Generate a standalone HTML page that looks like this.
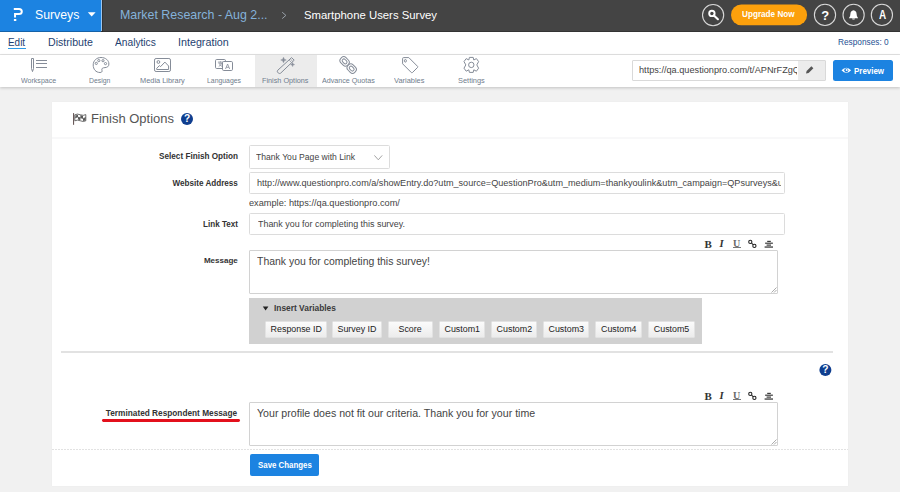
<!DOCTYPE html>
<html><head><meta charset="utf-8">
<style>
*{box-sizing:border-box;margin:0;padding:0}
html,body{width:900px;height:492px;overflow:hidden;background:#f1f1f1;font-family:"Liberation Sans",sans-serif;position:relative}
.a{position:absolute}
.t{position:absolute;white-space:nowrap;line-height:1}
svg{position:absolute;overflow:visible}
.ic{fill:none;stroke:#858c98;stroke-width:1}
.vb{position:absolute;top:321px;height:17px;background:linear-gradient(#fbfbfb,#ececec);border:1px solid #e2e2e2;border-radius:1px}
.vt{position:absolute;top:324.6px;font-size:8.9px;line-height:1;color:#222;white-space:nowrap}
</style></head><body>
<!-- top bar -->
<div class="a" style="left:0;top:0;width:900px;height:32px;background:#444"></div>
<div class="a" style="left:0;top:0;width:101px;height:32px;background:#1c83e1"></div>
<div class="a" style="left:101px;top:0;width:1px;height:31px;background:#9cc6ee"></div>
<div class="a" style="left:102px;top:0;width:1px;height:32px;background:#333"></div>
<div class="a" style="left:0;top:31px;width:900px;height:1px;background:rgba(0,0,0,.25)"></div>
<svg width="900" height="32" style="left:0;top:0">
  <path d="M13.8 8.9 H19 Q21.8 8.9 21.8 11.5 Q21.8 14.05 19 14.05 H15.05 V17.4" fill="none" stroke="#fff" stroke-width="2"/>
  <rect x="13.9" y="19" width="2.4" height="2" fill="#fff"/>
  <path d="M87.8 12.3 H95.6 L91.7 16.5 Z" fill="#fff"/>
  <path d="M282.2 12.2 L285.9 15.4 L282.2 18.6" fill="none" stroke="#9aa2aa" stroke-width="1"/>
  <circle cx="713.1" cy="15.1" r="10.6" fill="none" stroke="#d8d8d8" stroke-width="1.1"/>
  <circle cx="711.9" cy="13.4" r="2.7" fill="none" stroke="#fff" stroke-width="1.9"/>
  <path d="M713.9 15.4 L717.9 19.2" stroke="#fff" stroke-width="2.1" stroke-linecap="round"/>
  <rect x="731" y="4.6" width="76.1" height="20.6" rx="10.3" fill="#fca00c"/>
  <circle cx="825" cy="14.9" r="10.6" fill="none" stroke="#d8d8d8" stroke-width="1.1"/>
  <circle cx="853.6" cy="14.9" r="10.6" fill="none" stroke="#d8d8d8" stroke-width="1.1"/>
  <circle cx="881.9" cy="14.9" r="10.6" fill="none" stroke="#d8d8d8" stroke-width="1.1"/>
  <path d="M848.9 18.3 Q850.4 16.8 850.4 14 Q850.5 10.6 853.5 10.2 Q856.5 10.6 856.6 14 Q856.6 16.8 858.1 18.3 Z" fill="#fff"/>
  <path d="M852 18.4 H855 Q854.8 19.6 853.5 19.6 Q852.2 19.6 852 18.4 Z" fill="#fff"/>
</svg>
<div class="t" style="left:821.2px;top:8.6px;font-size:13px;font-weight:bold;color:#fff">?</div>
<div class="t" style="left:878.5px;top:9.1px;font-size:12.1px;font-weight:bold;color:#fff;transform:scaleX(.82);transform-origin:0 0">A</div>

<!-- nav -->
<div class="a" style="left:0;top:32px;width:900px;height:22px;background:#fff"></div>
<div class="a" style="left:0;top:54px;width:900px;height:1px;background:#e4e4e4"></div>
<div class="a" style="left:8px;top:48px;width:18px;height:1.3px;background:#2d9ae6"></div>

<!-- toolbar -->
<div class="a" style="left:0;top:55px;width:900px;height:32px;background:#fff;box-shadow:0 1px 3px rgba(0,0,0,.2)"></div>
<div class="a" style="left:255px;top:55px;width:62px;height:32px;background:#ececec"></div>
<svg width="900" height="90" style="left:0;top:0" class="ic">
  <!-- workspace -->
  <path d="M31.5 58.5 H33.5 V68.6 L32.5 71.6 L31.5 68.6 Z"/>
  <path d="M36 60.5 H47 M36 63.5 H47 M36 67.5 H47"/>
  <!-- palette -->
  <path d="M101 57.5 C105.6 57.5 108.9 60.4 108.9 64 C108.9 66.6 107.2 67.4 105 67.6 C102.6 67.8 101.3 68.4 102 70.4 C102.4 71.9 101.4 72.5 100 72.5 C95.8 72.5 93.2 69.2 93.2 65 C93.2 60.6 96.6 57.5 101 57.5 Z"/>
  <circle cx="98.8" cy="60.6" r="1.1"/><circle cx="103" cy="60.7" r="1.1"/><circle cx="96.3" cy="63.4" r="1.1"/><circle cx="105.5" cy="63.6" r="1.1"/>
  <!-- media -->
  <rect x="154.5" y="58.5" width="16" height="13" rx="1.6"/>
  <circle cx="158.4" cy="62" r="1.4"/>
  <path d="M156.7 69.5 V68.4 L159.4 65.6 L160.6 66.6 L164.9 62.1 L168.6 66 V69.5 Z"/>
  <!-- languages -->
  <path d="M222.5 68.5 H216.7 Q215.5 68.5 215.5 67.3 V60.7 Q215.5 59.5 216.7 59.5 H224.3 Q225.5 59.5 225.5 60.7 V61.5" stroke-width="1"/>
  <rect x="222.5" y="61.5" width="10" height="9" rx="1.2" stroke-width="1"/>
  <path d="M217.9 62.1 H222.9 M220.4 61.3 V62.4 M218.5 63.3 H222.3 L218.7 66.6 M219.4 64.5 L222.6 66.8" stroke-width=".8"/>
  <path d="M225.5 69 L227.6 64 L229.7 69 M226.3 67.3 H228.9" stroke-width=".8"/>
  <!-- wand -->
  <path d="M291.6 57.6 L294.2 60.2 L280.6 73.2 Q279.3 74 278.2 72.9 L277.6 72.3 Q276.8 71.2 277.8 70.2 Z"/>
  <path d="M289.2 60.2 L291.6 62.6 M290.4 59 L292.8 61.4" stroke-width=".7"/>
  <path d="M283.5 57.2 Q283.8 59.7 286.3 60 Q283.8 60.3 283.5 62.8 Q283.2 60.3 280.7 60 Q283.2 59.7 283.5 57.2 Z M292.6 62.6 Q292.8 64.4 294.6 64.6 Q292.8 64.8 292.6 66.6 Q292.4 64.8 290.6 64.6 Q292.4 64.4 292.6 62.6 Z" fill="#858c98" stroke-width=".4"/>
  <!-- chain -->
  <g transform="rotate(-45 344.6 61.4)"><rect x="341" y="56.6" width="7.2" height="9.6" rx="3.2"/><rect x="342.9" y="58.7" width="3.4" height="5.4" rx="1.7"/></g>
  <g transform="rotate(-45 351.7 68.6)"><rect x="348.1" y="63.8" width="7.2" height="9.6" rx="3.2"/><rect x="350" y="65.9" width="3.4" height="5.4" rx="1.7"/></g>
  <!-- tag -->
  <path d="M403.6 57.6 H408.8 L417.6 66.4 Q418 66.9 417.6 67.4 L412.4 72.6 Q411.9 73 411.4 72.6 L402.6 63.8 V58.6 Q402.6 57.6 403.6 57.6 Z"/>
  <ellipse cx="405.4" cy="60.8" rx="1" ry="1.3"/>
  <!-- gear -->
  <path d="M469.4 57.4 H473.2 L473.8 60 L476.4 58.6 L478.6 61.6 L476.8 64.9 L478.6 68.2 L476.4 71.2 L473.8 69.8 L473.2 72.4 H469.4 L468.8 69.8 L466.2 71.2 L464 68.2 L465.8 64.9 L464 61.6 L466.2 58.6 L468.8 60 Z" stroke-linejoin="round"/>
  <circle cx="471.3" cy="64.9" r="2.7"/>
</svg>

<!-- url + preview -->
<div class="a" style="left:632px;top:60px;width:194px;height:21px;border:1px solid #d9d9d9;background:#fff;border-radius:1px"></div>
<div class="a" style="left:833px;top:60px;width:59.5px;height:21px;background:#1c83e1;border-radius:2.5px"></div>

<!-- card -->
<div class="a" style="left:52px;top:102px;width:796px;height:384px;background:#fff;box-shadow:0 0 1px rgba(0,0,0,.06)"></div>
<div class="a" style="left:52px;top:137px;width:796px;height:2px;background:#f8f8f9"></div>
<svg width="900" height="492" style="left:0;top:0">
  <rect x="73" y="113.1" width="1.1" height="11.7" fill="#6a5a5a"/>
  <path d="M74.8 114.8 Q77.4 113.4 80.4 114.8 Q83.4 116 85.8 114.6 V120.8 Q83.4 122.2 80.4 120.8 Q77.4 119.4 74.8 120.8 Z" fill="none" stroke="#4a4a4a" stroke-width=".8"/>
  <path d="M74.8 117.8 Q77.4 116.4 80.4 117.8 Q83.4 119.1 85.8 117.6" fill="none" stroke="#4a4a4a" stroke-width=".7"/>
  <path d="M75.4 115.6 L78 114.8 V117 L75.4 117.6 Z M80.4 115 L83 116 V118.4 L80.4 117.8 Z M78 117 L80.4 117.8 V120.2 L78 119.4 Z M83 118.4 L85.6 117.8 V120.4 L83 121 Z" fill="#5a5a5a"/>
  <circle cx="187" cy="119" r="6" fill="#0f3e8f"/>
  <circle cx="825.4" cy="370" r="6" fill="#0f3e8f"/>
  <!-- select chevron -->
  <path d="M374.4 155.4 L378.3 159.8 L382.2 155.4" fill="none" stroke="#9a9a9a" stroke-width=".9"/>
</svg>
<div class="t" style="left:183.9px;top:114.4px;font-size:10.2px;font-weight:bold;color:#fff">?</div>
<div class="t" style="left:822.3px;top:365.4px;font-size:10.2px;font-weight:bold;color:#fff">?</div>

<!-- inputs -->
<div class="a" style="left:249px;top:145px;width:141px;height:24px;border:1px solid #dcdcdc;border-radius:1.5px"></div>
<div class="a" style="left:249px;top:172px;width:536px;height:21.5px;border:1px solid #dcdcdc;border-radius:1.5px"></div>
<div class="a" style="left:249px;top:213.4px;width:536px;height:21.5px;border:1px solid #dcdcdc;border-radius:1.5px"></div>
<div class="a" style="left:249px;top:250px;width:529px;height:44px;border:1px solid #d2d2d2;border-radius:1px"></div>
<div class="a" style="left:249px;top:402px;width:529px;height:44px;border:1px solid #d2d2d2;border-radius:1px"></div>

<!-- insert variables -->
<div class="a" style="left:249px;top:298px;width:453px;height:46px;background:#d1d1d1"></div>
<svg width="900" height="492" style="left:0;top:0">
  <path d="M262.8 306.4 H268.4 L265.6 310.4 Z" fill="#222"/>
</svg>
<div class="vb" style="left:265px;width:62px"></div><div class="vt" style="left:270.6px">Response ID</div>
<div class="vb" style="left:332.3px;width:49.4px"></div><div class="vt" style="left:337.5px">Survey ID</div>
<div class="vb" style="left:387.7px;width:45.1px"></div><div class="vt" style="left:398.5px">Score</div>
<div class="vb" style="left:438.7px;width:46.4px"></div><div class="vt" style="left:444.5px">Custom1</div>
<div class="vb" style="left:490.7px;width:46.6px"></div><div class="vt" style="left:496.6px">Custom2</div>
<div class="vb" style="left:542.6px;width:46.7px"></div><div class="vt" style="left:548.5px">Custom3</div>
<div class="vb" style="left:594.9px;width:47.3px"></div><div class="vt" style="left:601px">Custom4</div>
<div class="vb" style="left:647.8px;width:47.3px"></div><div class="vt" style="left:653.8px">Custom5</div>

<div class="a" style="left:61px;top:351px;width:772px;height:2px;background:#e2e2e2"></div>
<div class="a" style="left:52px;top:449px;width:796px;height:1px;background:repeating-linear-gradient(90deg,#e2e2e2 0 2px,transparent 2px 3px)"></div>
<div class="a" style="left:102px;top:419.3px;width:137.6px;height:2.8px;background:#e3101c;border-radius:1.4px"></div>
<div class="a" style="left:249.6px;top:454.3px;width:69.4px;height:21.3px;background:#1c83e1;border-radius:2px"></div>

<div class="t" style="left:34.7px;top:8.80px;font-size:12.29px;color:#fff;transform:scaleX(0.999);transform-origin:0 0;">Surveys</div>
<div class="t" style="left:119.8px;top:8.07px;font-size:13.27px;color:#84b2da;transform:scaleX(0.935);transform-origin:0 0;">Market Research - Aug 2...</div>
<div class="t" style="left:304.2px;top:9.47px;font-size:11.73px;color:#fff;transform:scaleX(0.968);transform-origin:0 0;">Smartphone Users Survey</div>
<div class="t" style="left:742.3px;top:10.20px;font-size:9.22px;font-weight:bold;color:#fff;transform:scaleX(0.887);transform-origin:0 0;">Upgrade Now</div>
<div class="t" style="left:7.7px;top:36.78px;font-size:10.89px;color:#1f3f70;transform:scaleX(0.913);transform-origin:0 0;">Edit</div>
<div class="t" style="left:48.3px;top:36.78px;font-size:10.89px;color:#1f3f70;transform:scaleX(0.975);transform-origin:0 0;">Distribute</div>
<div class="t" style="left:115.2px;top:36.78px;font-size:10.89px;color:#1f3f70;transform:scaleX(0.938);transform-origin:0 0;">Analytics</div>
<div class="t" style="left:178.1px;top:36.78px;font-size:10.89px;color:#1f3f70;transform:scaleX(0.987);transform-origin:0 0;">Integration</div>
<div class="t" style="left:838.3px;top:37.87px;font-size:8.66px;color:#244f92;transform:scaleX(0.956);transform-origin:0 0;">Responses: 0</div>
<div class="t" style="left:21.2px;top:76.85px;font-size:7.26px;color:#6f7c8c;transform:scaleX(0.974);transform-origin:0 0;">Workspace</div>
<div class="t" style="left:89.2px;top:76.85px;font-size:7.26px;color:#6f7c8c;transform:scaleX(0.948);transform-origin:0 0;">Design</div>
<div class="t" style="left:140.1px;top:76.85px;font-size:7.26px;color:#6f7c8c;transform:scaleX(1.020);transform-origin:0 0;">Media Library</div>
<div class="t" style="left:207.3px;top:76.85px;font-size:7.26px;color:#6f7c8c;transform:scaleX(0.948);transform-origin:0 0;">Languages</div>
<div class="t" style="left:261.9px;top:76.85px;font-size:7.26px;color:#6f7c8c;transform:scaleX(1.003);transform-origin:0 0;">Finish Options</div>
<div class="t" style="left:321.5px;top:76.85px;font-size:7.26px;color:#6f7c8c;transform:scaleX(0.985);transform-origin:0 0;">Advance Quotas</div>
<div class="t" style="left:394.0px;top:76.85px;font-size:7.26px;color:#6f7c8c;transform:scaleX(1.027);transform-origin:0 0;">Variables</div>
<div class="t" style="left:458.0px;top:76.85px;font-size:7.26px;color:#6f7c8c;transform:scaleX(1.023);transform-origin:0 0;">Settings</div>
<div class="a" style="left:639.4px;top:63.05px;width:157.6px;height:12.3px;overflow:hidden"><div class="t" style="left:0;top:3px;font-size:8.80px;color:#444;transform:scaleX(1.042);transform-origin:0 0;">https://qa.questionpro.com/t/APNrFZgQ</div></div>
<div class="t" style="left:853.6px;top:66.51px;font-size:8.38px;font-weight:bold;color:#fff;transform:scaleX(0.949);transform-origin:0 0;">Preview</div>
<div class="t" style="left:91.3px;top:113.06px;font-size:12.57px;color:#555;transform:scaleX(1.034);transform-origin:0 0;">Finish Options</div>
<div class="t" style="right:661.7px;top:151.65px;font-size:8.80px;font-weight:bold;color:#333;transform:scaleX(0.929);transform-origin:100% 0;">Select Finish Option</div>
<div class="t" style="right:661.8px;top:178.55px;font-size:8.80px;font-weight:bold;color:#333;transform:scaleX(0.923);transform-origin:100% 0;">Website Address</div>
<div class="t" style="right:661.8px;top:219.55px;font-size:8.80px;font-weight:bold;color:#333;transform:scaleX(0.918);transform-origin:100% 0;">Link Text</div>
<div class="t" style="right:662.2px;top:257.22px;font-size:7.54px;font-weight:bold;color:#333;transform:scaleX(1.065);transform-origin:100% 0;">Message</div>
<div class="t" style="right:662.6px;top:409.02px;font-size:9.08px;font-weight:bold;color:#333;transform:scaleX(0.911);transform-origin:100% 0;">Terminated Respondent Message</div>
<div class="t" style="left:256.2px;top:153.22px;font-size:9.08px;color:#444;transform:scaleX(0.948);transform-origin:0 0;">Thank You Page with Link</div>
<div class="a" style="left:257.4px;top:175.65px;width:523.5px;height:12.3px;overflow:hidden"><div class="t" style="left:0;top:3px;font-size:8.80px;color:#444;transform:scaleX(1.034);transform-origin:0 0;">http://www.questionpro.com/a/showEntry.do?utm_source=QuestionPro&amp;utm_medium=thankyoulink&amp;utm_campaign=QPsurveys&amp;utm_content=x</div></div>
<div class="t" style="left:249.2px;top:198.85px;font-size:8.80px;color:#444;transform:scaleX(1.046);transform-origin:0 0;">example: https://qa.questionpro.com/</div>
<div class="t" style="left:258.0px;top:219.52px;font-size:9.08px;color:#444;transform:scaleX(0.982);transform-origin:0 0;">Thank you for completing this survey.</div>
<div class="t" style="left:257.2px;top:255.54px;font-size:11.17px;color:#444;transform:scaleX(0.936);transform-origin:0 0;">Thank you for completing this survey!</div>
<div class="t" style="left:274.3px;top:303.62px;font-size:9.08px;font-weight:bold;color:#3a3a3a;transform:scaleX(0.922);transform-origin:0 0;">Insert Variables</div>
<div class="t" style="left:256.7px;top:407.78px;font-size:10.89px;color:#444;transform:scaleX(0.975);transform-origin:0 0;">Your profile does not fit our criteria. Thank you for your time</div>
<div class="t" style="left:257.5px;top:461.45px;font-size:8.80px;font-weight:bold;color:#fff;transform:scaleX(0.895);transform-origin:0 0;">Save Changes</div>
<!-- pencil cover on URL box -->
<div class="a" style="left:798px;top:61px;width:27px;height:19px;background:#ececec"></div>
<div class="a" style="left:781px;top:173px;width:3px;height:19.5px;background:#fff"></div>
<svg width="900" height="492" style="left:0;top:0">
  <path d="M806 73.6 L806.6 71 L811.4 66.2 L813.4 68.2 L808.6 73 Z" fill="#555"/>
  <path d="M841.5 70.2 Q846.3 65.2 851.1 70.2 Q846.3 75.2 841.5 70.2 Z" fill="#fff"/>
  <circle cx="846.3" cy="70.2" r="2" fill="#1c83e1"/><circle cx="846.7" cy="70" r="1" fill="#fff"/>
  <!-- resize grips -->
  <path d="M771.5 292.5 L776.5 287.5 M774 292.5 L776.5 290" stroke="#888" stroke-width=".7"/>
  <path d="M771.5 444.5 L776.5 439.5 M774 444.5 L776.5 442" stroke="#888" stroke-width=".7"/>
</svg>
<!-- BIU toolbars -->
<div class="t" style="left:704.6px;top:239.2px;font-family:'Liberation Serif',serif;font-weight:bold;font-size:11px;color:#333">B</div>
<div class="t" style="left:719.4px;top:239.3px;font-family:'Liberation Serif',serif;font-weight:bold;font-style:italic;font-size:10.6px;color:#333">I</div>
<div class="t" style="left:732.8px;top:239.3px;font-family:'Liberation Serif',serif;font-weight:bold;font-size:10.6px;color:#6a6a6a;transform:scaleX(.95);transform-origin:0 0">U</div><div class="a" style="left:733px;top:247px;width:8px;height:1px;background:#777"></div>
<div class="t" style="left:704.6px;top:391.2px;font-family:'Liberation Serif',serif;font-weight:bold;font-size:11px;color:#333">B</div>
<div class="t" style="left:719.4px;top:391.3px;font-family:'Liberation Serif',serif;font-weight:bold;font-style:italic;font-size:10.6px;color:#333">I</div>
<div class="t" style="left:732.8px;top:391.3px;font-family:'Liberation Serif',serif;font-weight:bold;font-size:10.6px;color:#6a6a6a;transform:scaleX(.95);transform-origin:0 0">U</div><div class="a" style="left:733px;top:399px;width:8px;height:1px;background:#777"></div>
<svg width="900" height="492" style="left:0;top:0">
  <g id="lk" fill="none" stroke="#222" stroke-width="1.1">
    <circle cx="750.3" cy="241.9" r="1.6"/><circle cx="754.4" cy="245.9" r="1.6"/><path d="M751.5 243.1 L753.2 244.7"/>
  </g>
  <g fill="#3c3c3c">
    <rect x="767.2" y="240.8" width="3.6" height="1.2"/><rect x="765.1" y="242.6" width="7.8" height="1.2"/>
      <rect x="766.6" y="244.5" width="4.4" height="1.2"/><rect x="764.6" y="246.4" width="8.4" height="1.3"/>
  </g>
  <g transform="translate(0 152)">
    <g fill="none" stroke="#222" stroke-width="1.1">
      <circle cx="750.3" cy="241.9" r="1.6"/><circle cx="754.4" cy="245.9" r="1.6"/><path d="M751.5 243.1 L753.2 244.7"/>
    </g>
    <g fill="#3c3c3c">
      <rect x="767.2" y="240.8" width="3.6" height="1.2"/><rect x="765.1" y="242.6" width="7.8" height="1.2"/>
      <rect x="766.6" y="244.5" width="4.4" height="1.2"/><rect x="764.6" y="246.4" width="8.4" height="1.3"/>
    </g>
  </g>
</svg>
</body></html>
